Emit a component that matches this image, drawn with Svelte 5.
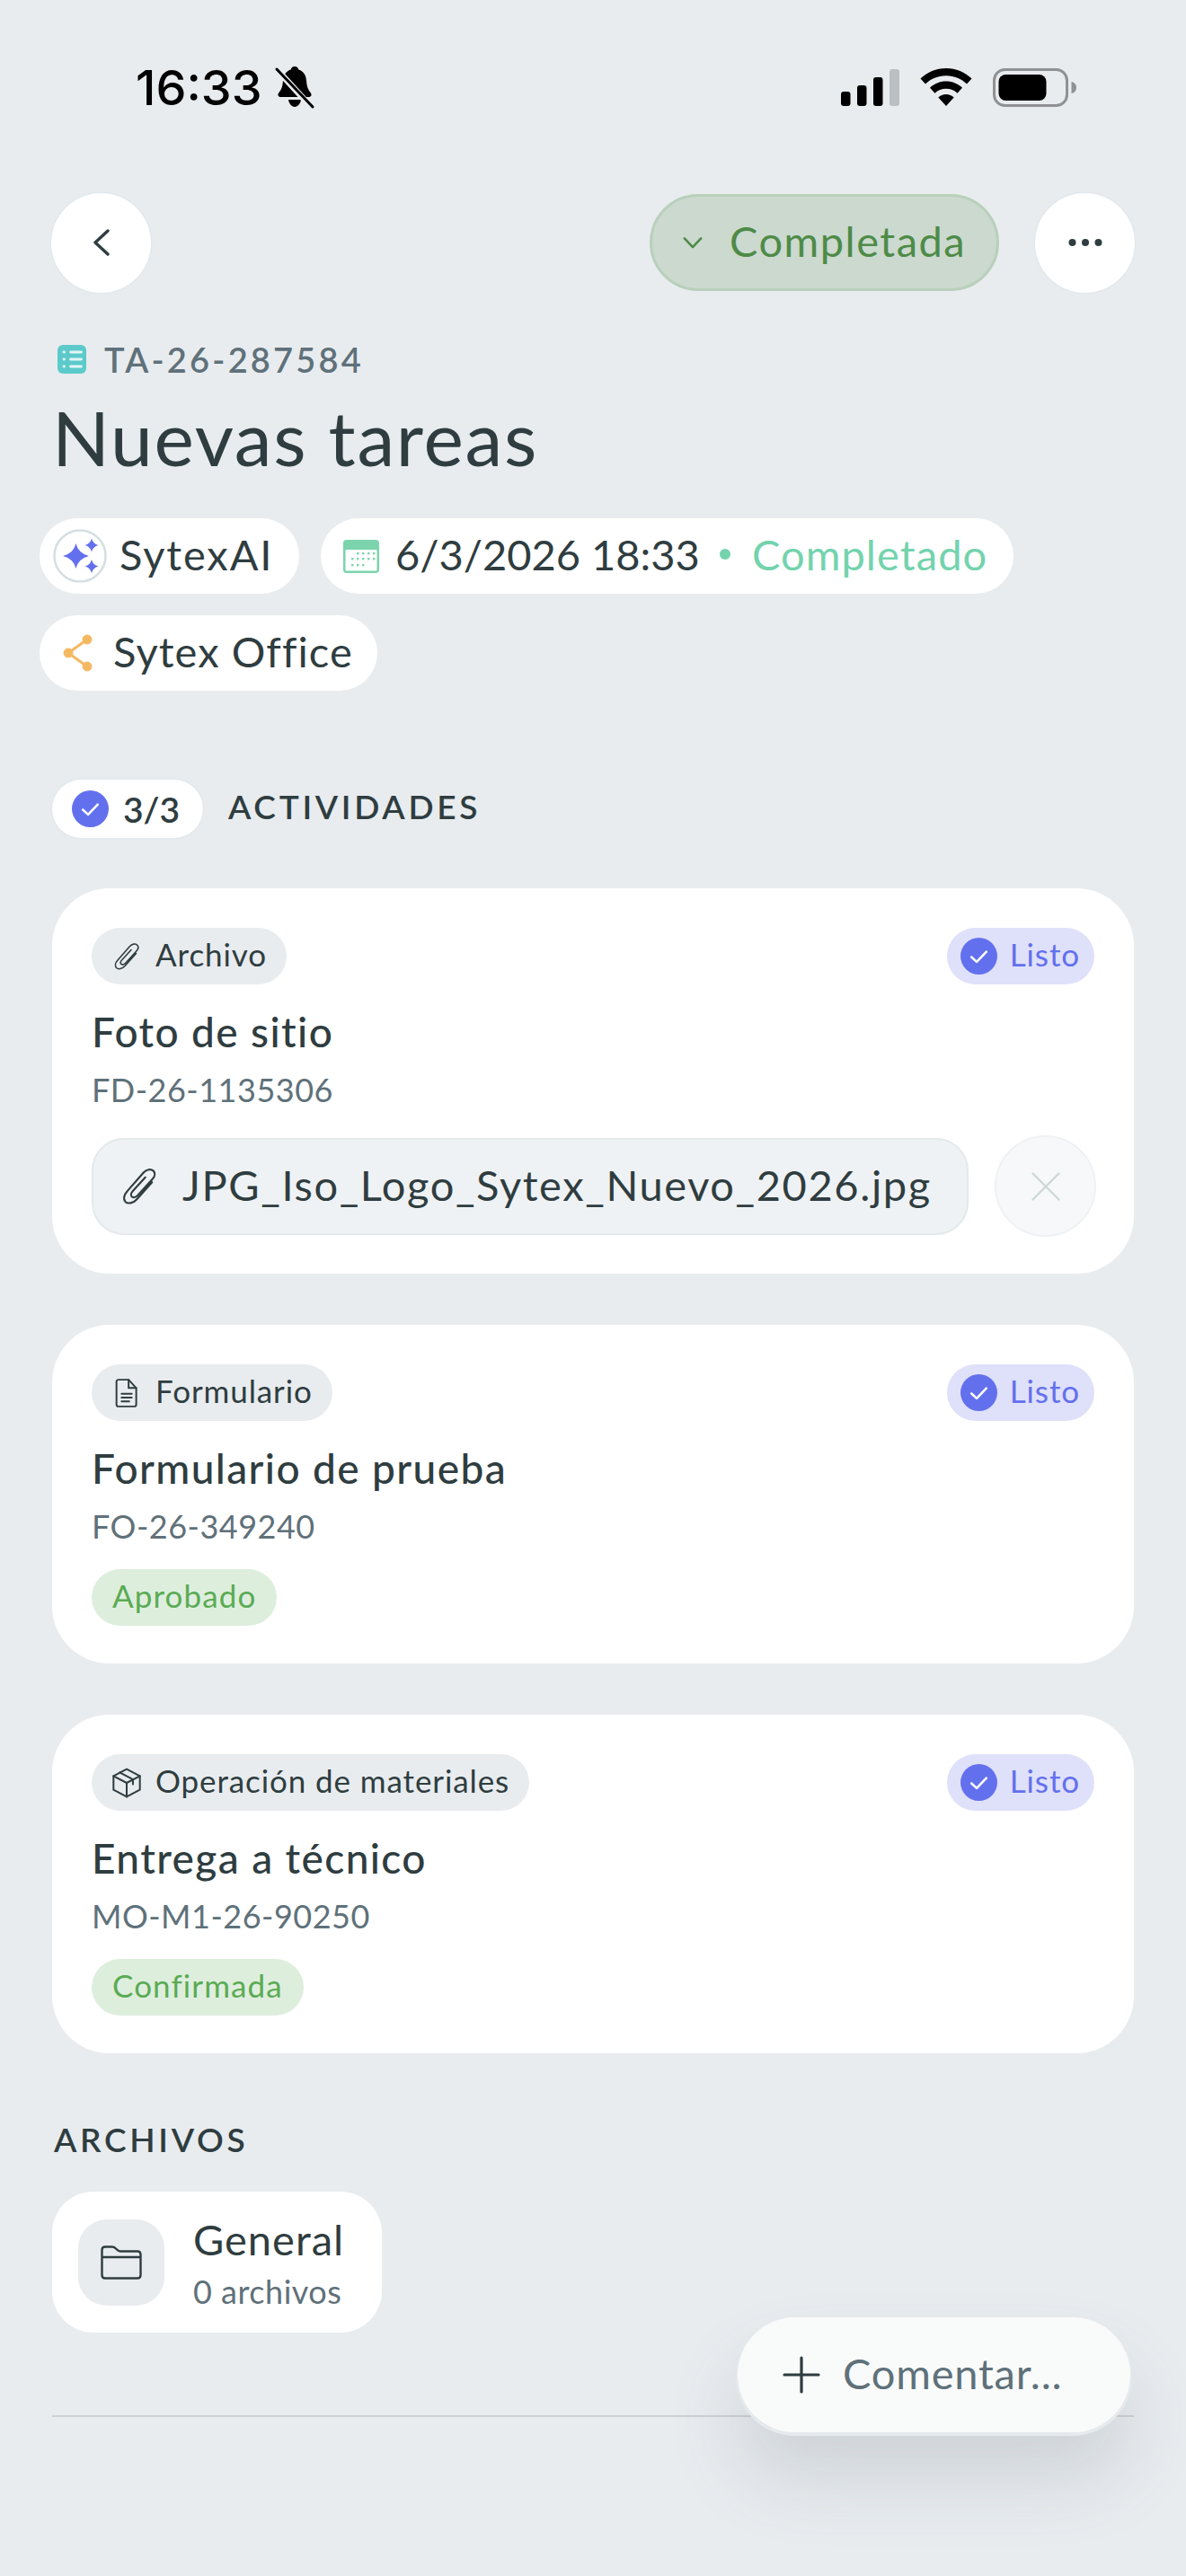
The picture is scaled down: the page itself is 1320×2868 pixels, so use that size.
<script>
	const activities = [
		{ kind: 'Archivo', icon: 'clip', title: 'Foto de sitio', code: 'FD-26-1135306', file: 'JPG_Iso_Logo_Sytex_Nuevo_2026.jpg' },
		{ kind: 'Formulario', icon: 'doc', title: 'Formulario de prueba', code: 'FO-26-349240', status: 'Aprobado' },
		{ kind: 'Operación de materiales', icon: 'box', title: 'Entrega a técnico', code: 'MO-M1-26-90250', status: 'Confirmada' }
	];
</script>

{#snippet clip()}
	<svg viewBox="-3 -1.5 34 34" fill="none" stroke="currentColor" stroke-width="1.600" stroke-linecap="round" stroke-linejoin="round">
		<path d="M24.500 12 12 26c-3 3.500-7.500 4-9.500 2-1.700-2-1.300-5.500 1.500-8.500L17.500 4c2.500-2.700 6-3.200 8-1.500 1.800 1.700 1.500 4.500-.5 6.700L12.500 23c-1.500 1.600-3.700 1.800-4.700.8s-.6-3 .9-4.600L19 8" />
	</svg>
{/snippet}

{#snippet check()}
	<svg class="check" viewBox="0 0 42 42">
		<circle cx="21" cy="21" r="21" fill="#6370ee" />
		<path d="M12.500 22l6 5.500 11-11.500" fill="none" stroke="#fff" stroke-width="2.600" stroke-linecap="round" stroke-linejoin="round" />
	</svg>
{/snippet}

<div class="page">
	<header class="status">
		<div class="clock">
			<span>16:33</span>
			<svg class="bell" viewBox="0 0 42 46">
				<path d="M21 0c2.500 0 4 1.600 4.300 3.500 6 2 8.200 6.500 8.700 12 .4 6 1.500 10 4.500 13.500 2 2.400 1 5-2 5H5.500c-3 0-4-2.600-2-5 3-3.500 4.100-7.500 4.500-13.500.5-5.500 2.700-10 8.700-12C17 1.600 18.500 0 21 0z" />
				<path d="M14 37h14c-.5 4-3.400 8-7 8s-6.500-4-7-8z" />
				<path d="M-1 1 41 47" stroke="#e8ecef" stroke-width="7" />
				<path d="M1 3 41 45" stroke="#000" stroke-width="3" stroke-linecap="round" />
			</svg>
		</div>
		<div class="sys">
			<svg class="signal" viewBox="0 0 65 41">
				<rect x="0" y="25" width="10.500" height="16" rx="3" />
				<rect x="18" y="18" width="10.500" height="23" rx="3" />
				<rect x="36" y="9" width="10.500" height="32" rx="3" />
				<rect x="54" y="0" width="11" height="41" rx="3" fill="#bcbfc2" />
			</svg>
			<svg class="wifi" viewBox="0 0 58 42">
				<path d="M29 0c11 0 21 4.300 28.500 11.500L52 17.500C46 11.800 38 8.300 29 8.300S12 11.800 6 17.500L.5 11.500C8 4.300 18 0 29 0z" />
				<path d="M29 14.500c7 0 13.300 2.700 18 7.200l-5.500 6C38.200 24.600 33.800 22.800 29 22.800s-9.200 1.800-12.500 4.900l-5.500-6c4.700-4.500 11-7.200 18-7.200z" />
				<path d="M29 29c3.300 0 6.400 1.300 8.700 3.400L29 42l-8.700-9.600C22.600 30.300 25.700 29 29 29z" />
			</svg>
			<svg class="battery" viewBox="0 0 93 43">
				<rect x="1.500" y="1.500" width="81" height="40" rx="12" fill="none" stroke="#8f9193" stroke-width="3" />
				<rect x="6.500" y="7" width="53" height="29" rx="8" />
				<path d="M87.500 15c3 .5 5.500 3 5.500 6.500s-2.500 6-5.500 6.500z" fill="#8f9193" />
			</svg>
		</div>
	</header>

	<nav class="topbar">
		<button class="round" aria-label="Volver">
			<svg viewBox="0 0 18 30" width="18" height="30" fill="none" stroke="#2f3d40" stroke-width="3.400" stroke-linecap="round" stroke-linejoin="round">
				<path d="M16 2 2 15l14 13" />
			</svg>
		</button>
		<button class="state">
			<svg viewBox="0 0 24 16" width="22" height="15" fill="none" stroke="#4e8b47" stroke-width="2.800" stroke-linecap="round" stroke-linejoin="round">
				<path d="M2 2.500 12 13 22 2.500" />
			</svg>
			Completada
		</button>
		<button class="round" aria-label="Más">
			<svg viewBox="0 0 38 10" width="38" height="10" fill="#2f3d40">
				<circle cx="4.500" cy="5" r="4" /><circle cx="19" cy="5" r="4" /><circle cx="33.500" cy="5" r="4" />
			</svg>
		</button>
	</nav>

	<section class="head">
		<div class="code">
			<svg viewBox="0 0 32 32" width="32" height="32" stroke-linecap="round">
				<rect width="32" height="32" rx="6" fill="#5ccaca" />
				<path d="M14.500 8h12M14.500 16h12M14.500 24h12" stroke="#e4f5f5" stroke-width="2.800" />
				<path d="M7 8h.6M7 16h.6M7 24h.6" stroke="#e4f5f5" stroke-width="2.800" />
			</svg>
			TA-26-287584
		</div>
		<h1>Nuevas tareas</h1>
	</section>

	<div class="tags">
		<div class="tag ai">
			<svg class="avatar" viewBox="0 0 60 60">
				<circle cx="30" cy="30" r="28.500" fill="#fff" stroke="#d5dfe1" stroke-width="2.500" />
				<path d="M25.500 16Q28 27 40 30 28 33 25.500 44 23 33 11 30 23 27 25.500 16z" fill="#6370ee" />
				<path d="M43 10.500Q44.500 16.500 50.500 18 44.500 19.500 43 25.500 41.500 19.500 35.500 18 41.500 16.500 43 10.500zM43 34Q44.500 40 50.500 41.500 44.500 43 43 49 41.500 43 35.500 41.500 41.500 40 43 34z" fill="#6370ee" />
			</svg>
			SytexAI
		</div>
		<div class="tag date">
			<svg class="cal" viewBox="0 0 40 37">
				<rect width="40" height="37" rx="4" fill="#7bd4ad" />
				<rect x="2.500" y="11" width="35" height="23.500" rx="1" fill="#fff" />
				<g fill="#7bd4ad">
					{#each [[15, 14], [21, 14], [27, 14], [33, 14], [9, 20], [15, 20], [21, 20], [27, 20], [33, 20], [9, 27], [15, 27], [21, 27]] as [x, y]}
						<rect {x} {y} width="2.400" height="2.400" />
					{/each}
				</g>
			</svg>
			6/3/2026 18:33
			<span class="done"><i></i>Completado</span>
		</div>
		<div class="tag office">
			<svg viewBox="0 0 36 46" width="36" height="46" fill="#f5b862" stroke="#f5b862">
				<path d="M28 8 7 23l21 15" fill="none" stroke-width="3" />
				<circle cx="28" cy="8" r="5" /><circle cx="7" cy="23" r="5" /><circle cx="28" cy="38" r="5" />
			</svg>
			Sytex Office
		</div>
	</div>

	<div class="section-title">
		<div class="count">
			{@render check()}
			3/3
		</div>
		<h2>ACTIVIDADES</h2>
	</div>

	<div class="cards">
		{#each activities as item}
			<article class="card">
				<div class="card-top">
					<span class="kind">
						{#if item.icon === 'clip'}
							{@render clip()}
						{:else if item.icon === 'doc'}
							<svg viewBox="0 0 24 24" fill="none" stroke="currentColor" stroke-width="1.400" stroke-linejoin="round" stroke-linecap="round">
								<path d="M5.500 1.500h8l6 6.500v13c0 1-.7 1.500-1.500 1.500H5.500c-.8 0-1.500-.5-1.500-1.500V3c0-1 .7-1.500 1.500-1.500z" />
								<path d="M13.500 1.500V8h6M8 12.500h8M8 15.500h8M8 18.500h6" />
							</svg>
						{:else}
							<svg viewBox="1 1 22 22" fill="none" stroke="currentColor" stroke-width="1.300" stroke-linejoin="round" stroke-linecap="round">
								<path d="M12 2 21.500 7v10L12 22l-9.500-5V7z" />
								<path d="M2.500 7 12 12l9.500-5M12 12v10M7 4.500 16.500 9.500v3.500" />
							</svg>
						{/if}
						{item.kind}
					</span>
					<span class="listo">{@render check()}Listo</span>
				</div>
				<h3>{item.title}</h3>
				<p class="id">{item.code}</p>
				{#if item.file}
					<div class="file-row">
						<div class="file">
							{@render clip()}
							{item.file}
						</div>
						<button class="remove" aria-label="Quitar">
							<svg viewBox="0 0 32 32" width="32" height="32" stroke="#cdd8d6" stroke-width="2.400" stroke-linecap="round">
								<path d="M1.500 1.500l29 29M30.500 1.500l-29 29" />
							</svg>
						</button>
					</div>
				{:else}
					<span class="result">{item.status}</span>
				{/if}
			</article>
		{/each}
	</div>

	<h2 class="files-title">ARCHIVOS</h2>
	<div class="folder">
		<div class="folder-icon">
			<svg viewBox="0 0 46 38" width="46" height="38" fill="none" stroke="#2f3d40" stroke-width="2.400" stroke-linejoin="round">
				<path d="M1.500 5c0-2 1.500-3.500 3.500-3.500h8c2 0 3 .8 4.500 2.500s2.500 2.500 4.500 2.500H41c2 0 3.500 1.500 3.500 3.500v23c0 2-1.500 3.500-3.500 3.500H5c-2 0-3.500-1.500-3.500-3.500z" />
				<path d="M1.500 13h43" />
			</svg>
		</div>
		<div>
			<div class="folder-name">General</div>
			<div class="folder-sub">0 archivos</div>
		</div>
	</div>

	<hr />

	<button class="fab">
		<svg viewBox="0 0 42 42" width="42" height="42" stroke="#2f3d40" stroke-width="3.200" stroke-linecap="round">
			<path d="M21 2v38M2 21h38" />
		</svg>
		Comentar...
	</button>
</div>

<style>
	:global(body) {
		margin: 0;
		background: #e8ecef;
	}

	.page {
		position: relative;
		width: 1320px;
		height: 2868px;
		overflow: hidden;
		box-sizing: border-box;
		padding: 0 58px;
		background: #e8ecef;
		color: #2f3d40;
		font-family: Lato, "Noto Sans", sans-serif;
	}

	button {
		font-family: inherit;
		border: 0;
		padding: 0;
	}

	/* Lato sits lower than the original face: lift the text, keep the icons centred */
	.tag svg,
	.state svg,
	.kind svg,
	.listo svg,
	.file svg,
	.fab svg {
		margin-top: 5px;
	}

	.status {
		display: flex;
		justify-content: space-between;
		align-items: center;
		height: 194px;
		padding: 0 64px 0 93px;
	}

	.clock {
		display: flex;
		align-items: center;
		gap: 15px;
		font-family: Inter, sans-serif;
		font-size: 54px;
		font-weight: 500;
		color: #000;
	}

	.bell {
		width: 42px;
		height: 46px;
		overflow: visible;
	}

	.sys {
		display: flex;
		align-items: center;
		gap: 23px;
	}

	.signal {
		width: 65px;
		height: 41px;
	}

	.wifi {
		width: 58px;
		height: 42px;
	}

	.battery {
		width: 93px;
		height: 43px;
	}

	.topbar {
		display: flex;
		align-items: center;
		gap: 40px;
		height: 112px;
		margin: 20px -1px 0;
	}

	.round {
		display: flex;
		align-items: center;
		justify-content: center;
		width: 111px;
		height: 111px;
		border-radius: 50%;
		background: #fff;
		box-shadow: 0 0 0 1.500px #e2e8ec;
	}

	.round:first-child {
		margin-right: auto;
	}

	.state {
		display: flex;
		align-items: center;
		gap: 30px;
		box-sizing: border-box;
		width: 389px;
		height: 108px;
		padding: 0 0 5px 34px;
		border-radius: 54px;
		border: 3px solid #b9d0bb;
		background: #cbd9cf;
		color: #4e8b47;
		font-size: 47px;
		letter-spacing: 1.500px;
	}

	.head {
		margin-top: 52px;
	}

	.code {
		display: flex;
		align-items: center;
		gap: 20px;
		padding-left: 6px;
		color: #5f717a;
		font-size: 38px;
		font-weight: 600;
		letter-spacing: 3.200px;
		line-height: 44px;
	}

	h1 {
		margin: 15px 0 0;
		font-size: 84px;
		font-weight: 400;
		line-height: 100px;
		letter-spacing: 1.700px;
	}

	.tags {
		display: flex;
		flex-wrap: wrap;
		gap: 24px;
		width: 1150px;
		margin: 40px 0 0 -14px;
	}

	.tag {
		display: flex;
		align-items: center;
		box-sizing: border-box;
		height: 84px;
		padding-bottom: 5px;
		border-radius: 42px;
		background: #fff;
		font-size: 47px;
	}

	.ai {
		gap: 14px;
		width: 289px;
		padding-left: 15px;
		letter-spacing: 1.900px;
	}

	.avatar {
		width: 60px;
		height: 60px;
	}

	.date {
		gap: 18px;
		width: 771px;
		padding-left: 25px;
	}

	.cal {
		width: 40px;
		height: 37px;
	}

	.done {
		display: flex;
		align-items: center;
		margin-left: 4px;
		color: #73d3ad;
		letter-spacing: 1.100px;
	}

	.done i {
		width: 12px;
		height: 12px;
		border-radius: 50%;
		background: #73d3ad;
		margin-right: 24px;
	}

	.office {
		gap: 21px;
		width: 376px;
		padding-left: 25px;
		letter-spacing: 1.100px;
	}

	.section-title {
		display: flex;
		align-items: center;
		gap: 28px;
		margin-top: 99px;
	}

	.count {
		display: flex;
		align-items: center;
		gap: 16px;
		box-sizing: border-box;
		width: 168px;
		height: 65px;
		padding-left: 22px;
		border-radius: 33px;
		background: #fff;
		box-shadow: 0 0 0 1.500px #e2e8ec;
		font-size: 39px;
		font-weight: 600;
	}

	.check {
		width: 41px;
		height: 41px;
		flex: none;
	}

	h2 {
		margin: 0;
		font-size: 37px;
		font-weight: 600;
		letter-spacing: 3.700px;
	}

	.section-title h2 {
		padding-bottom: 6px;
	}

	.cards {
		display: flex;
		flex-direction: column;
		gap: 57px;
		margin-top: 56px;
	}

	.card {
		box-sizing: border-box;
		padding: 44px 44px 42px;
		border-radius: 64px;
		background: #fff;
	}

	.card-top {
		display: flex;
		justify-content: space-between;
		align-items: center;
	}

	.kind,
	.listo,
	.result {
		display: inline-flex;
		align-items: center;
		box-sizing: border-box;
		height: 63px;
		border-radius: 32px;
		font-size: 35px;
		letter-spacing: 0.900px;
	}

	.kind {
		gap: 15px;
		padding: 0 22px 5px;
		background: #e8ecef;
	}

	.kind svg {
		width: 34px;
		height: 34px;
	}

	.listo {
		gap: 14px;
		padding: 0 16px 5px 15px;
		background: #dfe0fa;
		color: #6370ee;
	}

	h3 {
		margin: 23px 0 0;
		font-size: 46px;
		font-weight: 500;
		line-height: 60px;
		letter-spacing: 1.400px;
	}

	.id {
		margin: 11px 0 0;
		color: #5f717a;
		font-size: 36px;
		line-height: 46px;
		letter-spacing: 0.500px;
	}

	.file-row {
		display: flex;
		align-items: center;
		justify-content: space-between;
		margin: 28px -2px -1px 0;
	}

	.file {
		display: flex;
		align-items: center;
		gap: 25px;
		box-sizing: border-box;
		width: 976px;
		height: 108px;
		padding: 0 0 4px 28px;
		border: 2.500px solid #e4e9eb;
		border-radius: 36px;
		background: #eff2f4;
		font-size: 47px;
		letter-spacing: 1.600px;
	}

	.file svg {
		width: 46px;
		height: 46px;
		flex: none;
	}

	.remove {
		display: flex;
		align-items: center;
		justify-content: center;
		box-sizing: border-box;
		width: 113px;
		height: 113px;
		border: 2.500px solid #eff2f4;
		border-radius: 50%;
		background: #f7f8fa;
	}

	.result {
		margin-top: 25px;
		padding: 0 23px 5px;
		background: #deeedd;
		color: #5aab54;
		letter-spacing: 1.100px;
	}

	.files-title {
		margin: 74px 0 0 2px;
		line-height: 44px;
	}

	.folder {
		display: flex;
		align-items: center;
		gap: 32px;
		box-sizing: border-box;
		width: 367px;
		height: 157px;
		margin-top: 36px;
		padding-left: 29px;
		border-radius: 46px;
		background: #fff;
	}

	.folder-icon {
		display: flex;
		align-items: center;
		justify-content: center;
		width: 96px;
		height: 96px;
		border-radius: 32px;
		background: #e8ecef;
	}

	.folder-name {
		font-size: 47px;
		line-height: 56px;
		letter-spacing: 1px;
	}

	.folder-sub {
		margin-top: 8px;
		color: #5f717a;
		font-size: 36px;
		line-height: 44px;
		letter-spacing: 0.500px;
	}

	hr {
		height: 2px;
		margin: 92px 0 0;
		border: 0;
		background: #cdd1d5;
	}

	.fab {
		position: absolute;
		left: 821px;
		top: 2580px;
		display: flex;
		align-items: center;
		gap: 25px;
		box-sizing: border-box;
		width: 437px;
		height: 128px;
		padding: 0 0 5px 50px;
		border-radius: 64px;
		background: #f9fbfb;
		box-shadow: 0 2px 0 2px #e6eaed, 0 50px 80px rgba(90, 100, 110, 0.18);
		color: #5f717a;
		font-size: 47px;
		letter-spacing: 0.800px;
	}
</style>
